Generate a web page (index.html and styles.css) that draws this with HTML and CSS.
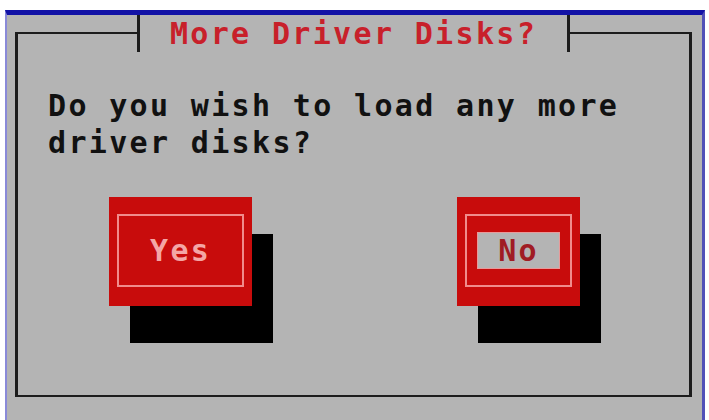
FILE: index.html
```html
<!DOCTYPE html>
<html lang="en">
<head>
    <meta charset="UTF-8">
    <meta name="viewport" content="width=device-width, initial-scale=1.0">
    <title>More Driver Disks?</title>
    <link rel="stylesheet" href="styles.css">
</head>
<body>
    <div class="screen">
        <div class="dialog">
            <div class="dialog-title">More Driver Disks?</div>

            <p class="dialog-text">Do you wish to load any more driver disks?</p>

            <div class="button-row">
                <div class="btn">
                    <div class="btn-face">
                        <span class="btn-label">Yes</span>
                    </div>
                </div>
                <div class="btn">
                    <div class="btn-face">
                        <span class="btn-label focused">No</span>
                    </div>
                </div>
            </div>
        </div>
    </div>
</body>
</html>
```

FILE: styles.css
```css
body {
    margin: 0;
    background-color: #fff;
    font-family: "DejaVu Sans Mono", "Liberation Mono", monospace;
    font-weight: bold;
    font-size: 30px;
    letter-spacing: 2.34px;
}
.screen {
    margin: 10px 4px 0 5px;
    padding: 0 10px 24px 8px;
    background-color: #b4b4b4;
    border-top: 5px solid #1212a6;
    border-left: 2px solid #8a8ad8;
    border-right: 3px solid #5050b8;
}
.dialog {
    margin-top: 17px;
    padding-bottom: 89px;
    border-style: solid;
    border-color: #1c1c1c;
    border-width: 2px 3px;
}
.dialog-title {
    width: 427px;
    height: 37px;
    margin: -19px 0 0 119px;
    line-height: 37px;
    text-align: center;
    color: #c8202a;
    background-color: #b4b4b4;
    border-left: 3px solid #1c1c1c;
    border-right: 3px solid #1c1c1c;
}
.dialog-text {
    margin: 36px 0 0 0;
    padding-left: 30px;
    line-height: 36.5px;
    color: #111;
}
.button-row {
    display: flex;
    align-items: flex-start;
    gap: 205px;
    margin-top: 36px;
    padding-left: 91px;
}
.btn {
    padding: 17px 8px 19px 8px;
    background-color: #c80c0c;
    box-shadow: 21px 37px 0 #000;
}
.btn-face {
    display: flex;
    justify-content: center;
    padding: 16px 10px;
    border: 2px solid #f08c8c;
}
.btn-label {
    height: 35px;
    padding: 0 20px;
    line-height: 35px;
    color: #f4a6a6;
    border: 1px solid transparent;
}
.btn-label.focused {
    color: #a01c24;
    background-color: #b4b4b4;
    border-color: #e89a9a;
}
```
